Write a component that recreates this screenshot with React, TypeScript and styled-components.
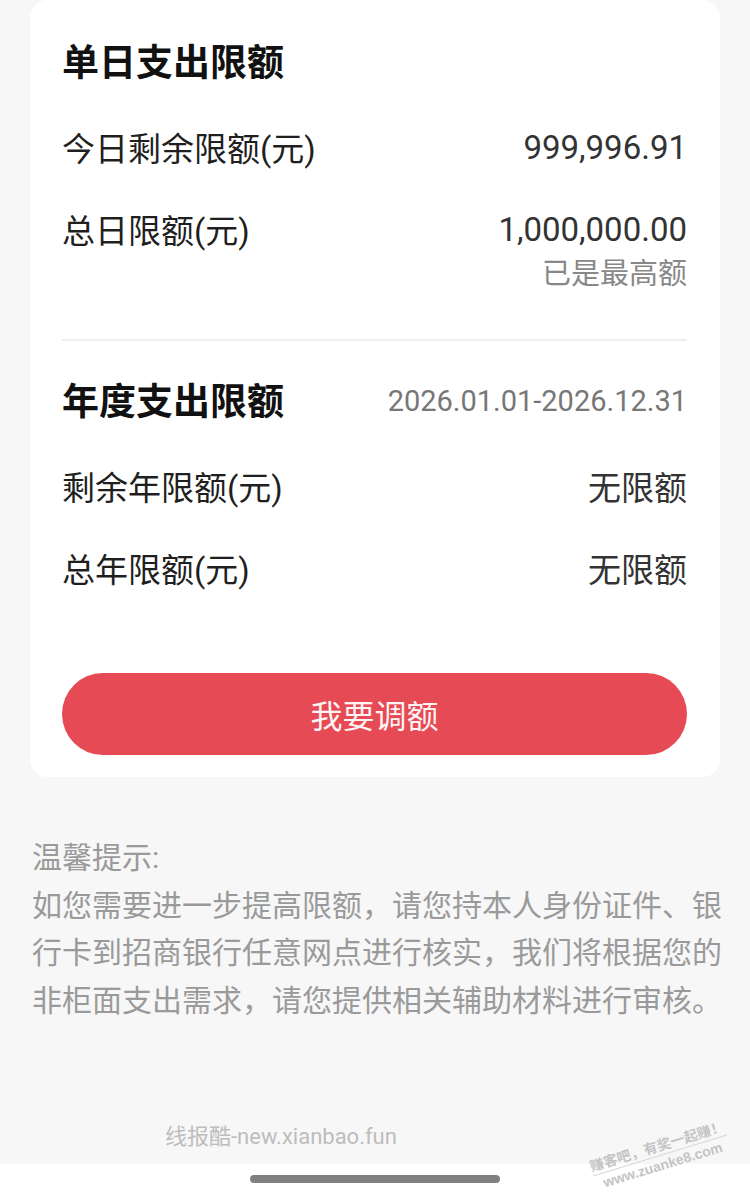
import { type FC } from 'react'
import styled, { createGlobalStyle } from 'styled-components'

const GlobalStyle = createGlobalStyle`
  html, body {
    margin: 0;
    padding: 0;
    background: #f7f7f7;
  }
  * {
    box-sizing: border-box;
  }
`

const Page = styled.div`
  position: relative;
  width: 750px;
  height: 1198px;
  display: flex;
  flex-direction: column;
  font-family: Roboto, "Noto Sans CJK SC", sans-serif;
  overflow: hidden;
`

const Content = styled.div`
  position: relative;
  flex: 1;
  background: #f7f7f7;
  padding: 0 30px;
`

const Card = styled.div`
  background: #fff;
  border-radius: 18px;
  padding: 35px 33px 22px 32px;
  display: flex;
  flex-direction: column;
`

const SectionHead = styled.div`
  display: flex;
  justify-content: space-between;
  align-items: center;
  height: 50px;
  margin-bottom: 2px;
`

const Title = styled.h2`
  margin: 0;
  font-size: 37px;
  font-weight: 700;
  color: #111;
`

const Period = styled.span`
  font-size: 29px;
  color: #777;
  padding-top: 4px;
`

const Row = styled.div`
  display: flex;
  justify-content: space-between;
  align-items: center;
  height: 44px;
  margin-top: 38px;
`

const Label = styled.span`
  font-size: 33px;
  color: #1f1f1f;
`

const Value = styled.span`
  font-size: 33px;
  color: #333;
`

const Note = styled.div`
  text-align: right;
  font-size: 29px;
  line-height: 36px;
  margin-top: 5px;
  color: #888;
`

const Divider = styled.hr`
  border: none;
  height: 2px;
  background: #eeeeee;
  margin: 47px 0 33px;
`

const AdjustButton = styled.button`
  margin-top: 83px;
  height: 82px;
  border: none;
  border-radius: 41px;
  background: #e54a55;
  color: #fff4f4;
  font-family: inherit;
  font-size: 32px;
`

const Tips = styled.div`
  padding: 57px 0 0 2px;
  margin-right: -2px;
  font-size: 30px;
  line-height: 47.5px;
  color: #9a9a9a;
`

const SiteMark = styled.div`
  position: absolute;
  left: 165px;
  bottom: 14px;
  font-size: 22px;
  color: #bdbdbd;
`

const Stamp = styled.div`
  position: absolute;
  right: 20px;
  bottom: 24px;
  transform: rotate(-17deg);
  font-size: 14px;
  font-weight: 700;
  color: #c4c4c4;
  line-height: 18px;
  text-align: center;
  font-family: "Liberation Sans", "Noto Sans CJK SC", sans-serif;
`

const StampLine = styled.div`
  border-bottom: 1px solid #d8d8d8;
`

const NavBar = styled.div`
  height: 34px;
  background: #fff;
  display: flex;
  justify-content: center;
  padding-top: 11px;
`

const HomeIndicator = styled.div`
  width: 250px;
  height: 8px;
  border-radius: 4px;
  background: #808080;
`

type LimitItem = {
  label: string
  value: string
  note?: string
}

const daily: LimitItem[] = [
  { label: '今日剩余限额(元)', value: '999,996.91' },
  { label: '总日限额(元)', value: '1,000,000.00', note: '已是最高额' }
]

const yearly: LimitItem[] = [
  { label: '剩余年限额(元)', value: '无限额' },
  { label: '总年限额(元)', value: '无限额' }
]

const LimitRows: FC<{ items: LimitItem[] }> = ({ items }) => (
  <>
    {items.map(item => (
      <div key={item.label}>
        <Row>
          <Label>{item.label}</Label>
          <Value>{item.value}</Value>
        </Row>
        {item.note && <Note>{item.note}</Note>}
      </div>
    ))}
  </>
)

export default function App() {
  return (
    <>
      <GlobalStyle />
      <Page>
        <Content>
          <Card>
            <SectionHead>
              <Title>单日支出限额</Title>
            </SectionHead>
            <LimitRows items={daily} />
            <Divider />
            <SectionHead>
              <Title>年度支出限额</Title>
              <Period>2026.01.01-2026.12.31</Period>
            </SectionHead>
            <LimitRows items={yearly} />
            <AdjustButton>我要调额</AdjustButton>
          </Card>
          <Tips>
            温馨提示:
            <br />
            如您需要进一步提高限额，请您持本人身份证件、银行卡到招商银行任意网点进行核实，我们将根据您的非柜面支出需求，请您提供相关辅助材料进行审核。
          </Tips>
          <SiteMark>线报酷-new.xianbao.fun</SiteMark>
        </Content>
        <NavBar>
          <HomeIndicator />
        </NavBar>
        <Stamp>
          <StampLine>赚客吧，有奖一起赚！</StampLine>
          <div>www.zuanke8.com</div>
        </Stamp>
      </Page>
    </>
  )
}
